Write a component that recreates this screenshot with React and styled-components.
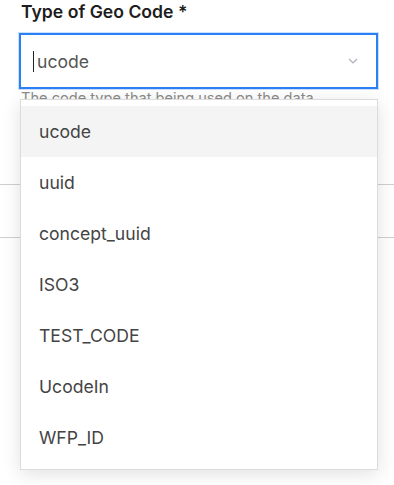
import React from 'react';
import styled, { createGlobalStyle } from 'styled-components';

const GlobalStyle = createGlobalStyle`
    html, body {
        margin: 0;
        padding: 0;
        background: #fff;
    }
    body {
        font-family: Inter, "Noto Sans", sans-serif;
        color: #222;
    }
`;

const Page = styled.div`
    position: relative;
    width: 394px;
    height: 485px;
    overflow: hidden;
`;

const Field = styled.div`
    padding: 0 16px 0 19px;
`;

const Label = styled.div`
    padding-left: 2px;
    font-size: 17.6px;
    font-weight: 600;
    line-height: 24px;
    color: #1d1d1d;
    margin-bottom: 9px;
`;

const Control = styled.div`
    display: flex;
    align-items: center;
    height: 56px;
    box-sizing: border-box;
    border: 2px solid #2b80f6;
    box-shadow: 0 0 0 1px rgba(43, 128, 246, 0.25);
    background: #fff;
    padding: 0 18px 0 12px;
`;

const Caret = styled.span`
    width: 1px;
    height: 21px;
    background: #222;
    margin-right: 3px;
`;

const Value = styled.span`
    flex: 1;
    font-size: 17.6px;
    color: #555;
`;

const Chevron = styled.svg`
    width: 10px;
    height: 6px;
    flex-shrink: 0;
`;

const Helper = styled.div`
    padding-left: 2px;
    margin-top: 1px;
    font-size: 14.6px;
    line-height: 16px;
    color: #8c8c8c;
    white-space: nowrap;
`;

const Rows = styled.div`
    margin-top: 78px;
    height: 52px;
    border-top: 1px solid #cfcfcf;
    border-bottom: 1px solid #cfcfcf;
`;

const Menu = styled.ul`
    position: absolute;
    top: 99px;
    left: 20px;
    width: 358px;
    box-sizing: border-box;
    margin: 0;
    padding: 6px 0;
    list-style: none;
    background: #fff;
    border: 1px solid #dcdcdc;
    box-shadow: 0 4px 18px rgba(0, 0, 0, 0.12);
`;

const Option = styled.li`
    display: flex;
    align-items: center;
    height: 51px;
    padding-left: 18px;
    font-size: 17.6px;
    color: #444;
    background: ${(p) => (p.active ? '#f4f4f4' : '#fff')};
`;

const options = ['ucode', 'uuid', 'concept_uuid', 'ISO3', 'TEST_CODE', 'UcodeIn', 'WFP_ID'];

export default function App() {
    return (
        <Page>
            <GlobalStyle />
            <Field>
                <Label>Type of Geo Code *</Label>
                <Control>
                    <Caret />
                    <Value>ucode</Value>
                    <Chevron viewBox="0 0 10 6">
                        <path d="M1 1l4 4 4-4" fill="none" stroke="#a9b0ba" strokeWidth="1.2" />
                    </Chevron>
                </Control>
                <Helper>The code type that being used on the data</Helper>
            </Field>
            <Rows />
            <Menu>
                {options.map((o, i) => (
                    <Option key={o} active={i === 0}>{o}</Option>
                ))}
            </Menu>
        </Page>
    );
}
